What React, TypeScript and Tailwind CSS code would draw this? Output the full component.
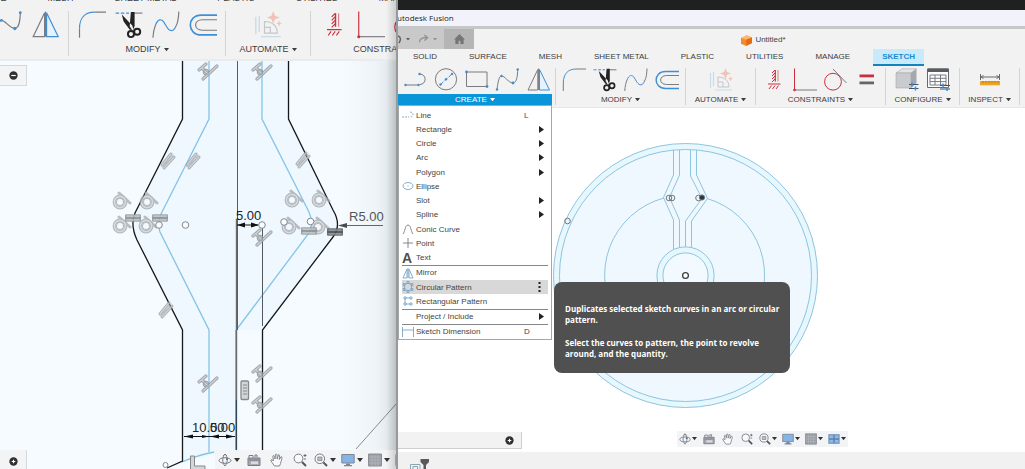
import type { ReactNode } from 'react'
import clsx from 'clsx'

const GREY = '#7b7b80'
const BLUE = '#3f8fd6'
const RED = '#c9303c'
const SKY = '#85c3e6'

const TABS = ['SOLID', 'SURFACE', 'MESH', 'SHEET METAL', 'PLASTIC', 'UTILITIES', 'MANAGE', 'SKETCH']

// Toolbar artwork, drawn on a 24x24 grid
const toolArt: Record<string, ReactNode> = {
  Line: (
    <>
      <path d="M2 17H15" stroke={GREY} />
      <path d="M16.5 6C24 6 24 16.5 16.5 16.5" stroke={GREY} />
      <g fill={BLUE} stroke="none"><circle cx="2.5" cy="17" r="1.2" /><circle cx="15.5" cy="17" r="1.2" /><circle cx="16.5" cy="6" r="1.2" /></g>
    </>
  ),
  Circle: (
    <>
      <circle cx="12" cy="11.3" r="10.6" stroke={GREY} />
      <path d="M6.5 16.5L18 6" stroke={BLUE} strokeDasharray="4 1.5" />
      <g fill={BLUE} stroke="none"><circle cx="6.5" cy="16.5" r="1.2" /><circle cx="12" cy="11.3" r="1.2" /><circle cx="18" cy="6" r="1.2" /></g>
    </>
  ),
  Rectangle: (
    <>
      <path d="M1.5 4H22V18.5H1.5Z" stroke={GREY} />
      <g fill={BLUE} stroke="none"><circle cx="1.5" cy="4" r="1.4" /><circle cx="22" cy="18.5" r="1.4" /></g>
    </>
  ),
  Spline: (
    <>
      <path d="M1 21.5C2 14 3 8 5.5 8C9 8 12 14.5 17 15C21 14.5 21.5 8 21.7 1" stroke={GREY} />
      <g fill={BLUE} stroke="none"><circle cx="1" cy="21.5" r="1.2" /><circle cx="5.5" cy="8" r="1.2" /><circle cx="17" cy="15" r="1.4" /><circle cx="21.7" cy="1.5" r="1.2" /></g>
    </>
  ),
  Mirror: (
    <>
      <path d="M10.8 1.5V22H1Z" stroke={GREY} />
      <path d="M12.5 1.5V22H22.5Z" stroke={BLUE} fill="#e4f3fd" />
      <path d="M11.6 .5V22" stroke={GREY} />
    </>
  ),
  Fillet: (
    <>
      <path d="M1.3 23V15M14 1H24" stroke={GREY} />
      <path d="M1.3 15C1.3 6 6 1 14 1" stroke={BLUE} />
    </>
  ),
  Trim: (
    <>
      <path d="M.5 1.8H12" stroke={BLUE} strokeDasharray="3 1.5" />
      <path d="M16.5 1.8H23.5" stroke={GREY} />
      <path d="M5.8 3L7.4 9L12.5 15.8L16 17L14.8 12.5ZM13.6 .8H16.8V13L15 17L12.6 13Z" fill="#222" stroke="none" />
      <circle cx="13.7" cy="19.8" r="2.6" stroke="#222" strokeWidth="1.7" />
      <circle cx="19" cy="17.8" r="2.6" stroke="#222" strokeWidth="1.7" />
    </>
  ),
  Extend: (
    <>
      <path d="M.8 23C1 18 2 14.5 3 12M20.5 13C22.5 10 22.8 5 23 .5" stroke={GREY} />
      <path d="M3 12C5 7 8 6 10.5 10C13 14.5 15 18 18 16.5C19 16 20 14.5 20.5 13" stroke={BLUE} />
    </>
  ),
  Offset: (
    <>
      <path d="M24 3.5H10.5C-2 3.5-2 20.5 10.5 20.5H24" stroke={BLUE} strokeWidth="1.4" />
      <path d="M24 7.5H11.5C3.7 7.5 3.7 16.5 11.5 16.5H24" stroke={GREY} />
    </>
  ),
  AutoConstrain: (
    <g opacity=".45">
      <path d="M1.5 5V20M4.5 4V18M6 22H23" stroke="#9ec3df" strokeWidth="1.2" />
      <path d="M9 9V19H20C20 13 16 9 9 9ZM9 14H14V19" stroke="#8c939c" />
      <path d="M16.5 0L18 4L22 5.5L18 7L16.5 11L15 7L11 5.5L15 4ZM21.5 8L22.2 10L24 10.7L22.2 11.4L21.5 13.4L20.8 11.4L19 10.7L20.8 10Z" fill="#ef8a73" stroke="none" />
    </g>
  ),
  Fix: (
    <g stroke={RED}>
      <path d="M13.3 2V13.5M6 16H18.5" strokeWidth="1.2" />
      <path d="M16 2V13.5" strokeWidth=".6" />
      <path d="M13 2L10 5M13 5L10 8M13 8L10 11M13 11L10 14M9.5 17.5L7 21M13 17.5L10.5 21M16.5 17.5L14 21" />
    </g>
  ),
  Perpendicular: (
    <>
      <path d="M1.5 22H24" stroke={GREY} />
      <path d="M1.5 .5V22" stroke={RED} />
      <circle cx="1.5" cy="22" r="1.3" fill={RED} stroke="none" />
    </>
  ),
  Tangent: (
    <>
      <circle cx="9" cy="13.7" r="8.4" stroke={RED} />
      <path d="M9 1L22.5 15" stroke={GREY} />
    </>
  ),
  Equal: (
    <g stroke="none">
      <path d="M4.5 6.5H19V9.3H4.5Z" fill={RED} />
      <path d="M4.5 13.5H19V16.3H4.5Z" fill="#66666a" />
    </g>
  ),
  Configure: (
    <>
      <path d="M1 5L7 .8H21.5L16 5Z" fill="#e3e4e6" stroke="#a5a8ac" strokeWidth=".6" />
      <path d="M1 5H16V20H1Z" fill="#c9cbce" stroke="#a5a8ac" strokeWidth=".6" />
      <path d="M16 5L21.5 .8V15L16 20Z" fill="#a4a7ab" stroke="none" />
      <path d="M14 16.5H23.5M14 20.5H23.5" stroke="#3f5366" strokeWidth="1.2" />
      <path d="M17 14.5V18.5M20.5 18.5V22.5" stroke={BLUE} strokeWidth="1.6" />
    </>
  ),
  Table: (
    <>
      <path d="M1.5 1H22.5V19.5H1.5Z" fill="#fff" stroke="#66696e" />
      <path d="M1.5 .5H22.5V4H1.5Z" fill="#595c61" stroke="none" />
      <path d="M4 7H20V17H4ZM4 10.3H20M4 13.6H20M9 7V17M14.5 7V17" stroke="#777b80" />
      <path d="M14 17.5H24M14 21H24" stroke="#3f5366" strokeWidth="1.2" />
      <path d="M17 15.5V19.5M21 19V23" stroke={BLUE} strokeWidth="1.6" />
    </>
  ),
  Measure: (
    <>
      <path d="M2.5 6V12M21.5 6V12M3 9H21M5.5 7.5L3 9L5.5 10.5M18.5 7.5L21 9L18.5 10.5" stroke="#66696e" />
      <path d="M2 13H22V17.3H2Z" fill="#eda51f" stroke="none" />
      <path d="M5 13V15M8 13V15M11 13V15M14 13V15M17 13V15M20 13V15" stroke="#a86c00" strokeWidth=".7" />
    </>
  ),
}

function ToolButton({ name, large }: { name: string; large?: boolean }) {
  return (
    <button aria-label={name} className="shrink-0">
      <svg viewBox="0 0 24 24" fill="none" className={clsx('overflow-visible', large ? 'size-7' : 'size-6')}>
        {toolArt[name]}
      </svg>
    </button>
  )
}

function Caret({ className }: { className?: string }) {
  return (
    <svg viewBox="0 0 6 4" className={clsx('shrink-0', className)} fill="currentColor">
      <path d="M0 0H6L3 4Z" />
    </svg>
  )
}

interface ToolGroupProps {
  label?: string
  tools: string[]
  large?: boolean
  active?: boolean
  className?: string
  children?: ReactNode
}

function ToolGroup({ label, tools, large, active, className, children }: ToolGroupProps) {
  return (
    <div className={clsx('relative flex shrink-0 flex-col border-r border-[#d4d4d4]', className)}>
      <div className={clsx('flex', large ? 'gap-[9px]' : 'gap-[7px]', label ? 'justify-center' : 'justify-end pr-2')}>
        {tools.map((tool) => (
          <ToolButton key={tool} name={tool} large={large} />
        ))}
      </div>
      {label && (
        <button
          className={clsx(
            'flex items-center justify-center gap-[3px]',
            large ? 'mt-[5px] h-3 text-[9px]' : 'mt-[2px] h-[11px] text-[8px]',
            active ? 'mr-[3px] bg-[#0b95d9] text-white' : 'text-[#3c3c3c]',
          )}
        >
          {label}
          <Caret className="w-[5px]" />
        </button>
      )}
      {children}
    </div>
  )
}

// Navigation bar artwork, 14x14 grid
const navArt: Record<string, ReactNode> = {
  Orbit: (
    <g stroke="#777b82">
      <ellipse cx="7" cy="7.5" rx="6" ry="2.8" />
      <path d="M7 1C4 4 4 10 7 13C10 10 10 4 7 1ZM5 3L7 1L9 3" />
      <circle cx="9" cy="6" r="1" fill="#446b96" stroke="none" />
    </g>
  ),
  'Look At': (
    <>
      <path d="M1 5H13V12.5H1Z" fill="#a6abb2" stroke="#777b82" />
      <path d="M2 4.5V2.5H6V4.5M8 4.5V2H10V4.5M2 7H12" stroke="#777b82" />
      <path d="M4 8.5H11V11H4Z" fill="#d8dce0" stroke="none" />
    </>
  ),
  Pan: (
    <path d="M4.5 13L2 9.5L.8 7C1.4 6 2.5 6.8 3.5 8L2.8 3C3.5 2 4.5 2.4 5 6L5.5 1.3C6.4.5 7.2 1 7.2 6L8.4 1.8C9.4 1.2 9.8 2 9.3 6.5L11 3.7C12 3.5 12.3 4.2 11.4 7.5L10.5 10.5L9.5 13Z" fill="#fafafa" stroke="#777b82" strokeWidth=".9" />
  ),
  Zoom: (
    <>
      <circle cx="5.5" cy="5.5" r="4.4" fill="#fafafa" stroke="#777b82" />
      <path d="M9 9L13 13" stroke="#505358" strokeWidth="2" />
      <path d="M10.5 2.5H13.5M12 1V4M11 6H13" stroke="#505358" strokeWidth=".8" />
    </>
  ),
  Fit: (
    <>
      <circle cx="5.8" cy="5.8" r="4.8" fill="#fafafa" stroke="#777b82" />
      <path d="M3.8 4H8V7.6H3.8Z" fill="#b9bdc3" stroke="#777b82" strokeWidth=".7" />
      <path d="M9.4 9.4L13 13" stroke="#505358" strokeWidth="2" />
    </>
  ),
  Display: (
    <>
      <path d="M.8 1.5H13.2V10H.8Z" fill="#85b4e6" stroke="#7e8791" />
      <path d="M5 10.5H9V12H11V13.3H3V12H5Z" fill="#7e8791" stroke="none" />
    </>
  ),
  Grid: (
    <>
      <path d="M.5 1H13.5V13H.5Z" fill="#9a9ea5" stroke="#8b8f96" />
      <path d="M1 4H13M1 7H13M1 10H13M4 2V13M7 2V13M10 2V13" stroke="#c0c4c9" strokeWidth=".5" />
    </>
  ),
  Viewports: (
    <>
      <path d="M.5 1.5H13.5V12.5H.5Z" fill="#5f7fa8" stroke="none" />
      <path d="M1.5 2.5H6.2V6.2H1.5ZM7.8 2.5H12.5V6.2H7.8ZM1.5 7.8H6.2V11.5H1.5ZM7.8 7.8H12.5V11.5H7.8Z" fill="#8fbaf0" stroke="none" />
    </>
  ),
}

const DROPDOWNS = ['Orbit', 'Fit', 'Display', 'Grid', 'Viewports']

function NavBar({ large, className }: { large?: boolean; className?: string }) {
  return (
    <div className={clsx('absolute flex items-center gap-[5px] bg-[#f3f4f5]', className)}>
      {Object.keys(navArt).map((name) => {
        const drop = DROPDOWNS.includes(name)
        return (
          <button
            key={name}
            aria-label={name}
            className={clsx('flex shrink-0 items-center text-[#333]', large ? 'gap-[2px]' : 'gap-px', !drop && (large ? 'px-[2px]' : 'px-px'))}
          >
            <svg viewBox="0 0 14 14" fill="none" className={large ? 'size-3.5' : 'size-3'}>
              {navArt[name]}
            </svg>
            {drop && <Caret className={large ? 'w-[6px]' : 'w-[5px]'} />}
          </button>
        )
      })}
    </div>
  )
}

function RoundToggle({ plus }: { plus?: boolean }) {
  return (
    <svg viewBox="0 0 10 10" className="size-[9px]">
      <circle cx="5" cy="5" r="4.6" fill="#303030" />
      <path d={plus ? 'M3 5H7M5 3V7' : 'M2.5 5H7.5'} stroke="#fff" strokeWidth="1.3" />
    </svg>
  )
}

// Constraint badges that sit next to the sketch curves
function ParallelMark({ x, y }: { x: number; y: number }) {
  return (
    <g transform={`translate(${x} ${y})`} strokeLinecap="round" opacity=".8">
      <path d="M-6 4L3 -7M-4 7L6 -4" stroke="#959ba0" strokeWidth="3" />
      <path d="M-6 4L3 -7M-4 7L6 -4" stroke="#c7cbce" strokeWidth="1.2" />
      <path d="M-5.5 6L5 -6" stroke="#aab0b4" strokeWidth="1" />
    </g>
  )
}

function CoincidentMark({ x, y }: { x: number; y: number }) {
  const d = 'M-9 -2L-2 -8M-6 -4L0 2M-5 7L9 -6'
  return (
    <g transform={`translate(${x} ${y})`} strokeLinecap="round" fill="none" opacity=".85">
      <path d={d} stroke="#92979b" strokeWidth="3.2" />
      <path d={d} stroke="#c7cbce" strokeWidth="1.4" />
      <circle cx="-2" cy="0" r="2.6" stroke="#92979b" strokeWidth="1.2" />
    </g>
  )
}

function TangentMark({ x, y }: { x: number; y: number }) {
  return (
    <g transform={`translate(${x} ${y})`} fill="none" opacity=".75">
      <path d="M-1 -9L10 1" stroke="#a5abaf" strokeWidth="3" strokeLinecap="round" />
      <circle r="5.6" stroke="#999fa4" strokeWidth="3.6" />
      <circle r="5.6" stroke="#cdd1d4" strokeWidth="1.6" />
      <circle r="3.6" fill="#f5faff" stroke="#8b9196" strokeWidth=".8" />
    </g>
  )
}

function EqualMark({ x, y, dark }: { x: number; y: number; dark?: boolean }) {
  return (
    <g transform={`translate(${x} ${y})`} opacity=".9">
      <rect x="-8" y="-3.8" width="16" height="7.6" rx="1" fill={dark ? '#606468' : '#999fa3'} />
      <path d="M-6.5 -1.8H6.5M-6.5 1.8H6.5" stroke={dark ? '#94989b' : '#c9cdd0'} strokeWidth="1.2" />
      <path d="M-8 0H8" stroke={dark ? '#2e3032' : '#787e82'} strokeWidth=".8" />
    </g>
  )
}

function DetailSketch() {
  return (
    <svg viewBox="0 61 398 408" preserveAspectRatio="xMinYMin slice" fill="none" className="absolute inset-0 size-full">
      <path d="M182 61V119L134 213Q131 225 137 240L182 330V461L236 450V330H262L323 250L333 237Q342 225 333 210L288 119V61Z" fill="#eff8fe" />
      <g stroke={SKY} strokeWidth="1.3">
        <path d="M209 61V119L161 214Q157 222 160 232L209 330V452" />
        <path d="M262 61V119L309 212Q314 224 309 233L237 329" />
        <path d="M182 462Q198 455 214 452" />
      </g>
      <path d="M237.5 61V330" stroke="#5a5c5e" />
      <path d="M236.5 219V400" stroke="#686b6d" strokeWidth="1.4" />
      <path d="M235.5 330V450" stroke="#6fb1d8" />
      <path d="M236.5 400V450" stroke="#2c4656" strokeWidth="1.2" />
      <path d="M262.5 228V326" stroke="#55585a" />
      <g stroke="#16181a" strokeWidth="1.3">
        <path d="M182.5 61V119L135 213Q130 225 137 240L182.5 330V461L167 468" />
        <path d="M288.5 61V119L333 210Q342 225 333 237L262.5 330V450" />
      </g>
      <path d="M356 449L397 403" stroke="#8d9093" />

      {[[208, 72], [262, 72], [262, 238], [208, 384], [262, 374], [262, 405]].map(([x, y]) => (
        <CoincidentMark key={`${x}-${y}`} x={x} y={y} />
      ))}
      {[[168, 161], [193, 161], [303, 160], [166, 310]].map(([x, y]) => (
        <ParallelMark key={`${x}-${y}`} x={x} y={y} />
      ))}
      {[[120, 202], [147, 202], [120, 226], [146, 226], [292, 200], [319, 200], [289, 227], [318, 227]].map(([x, y]) => (
        <TangentMark key={`${x}-${y}`} x={x} y={y} />
      ))}
      <EqualMark x={133} y={218} />
      <EqualMark x={160} y={218} />
      <EqualMark x={309} y={231} />
      <EqualMark x={335} y={232} dark />
      <rect x="241" y="381" width="7.5" height="18.5" rx="1" fill="#d3d6d9" stroke="#85898c" strokeWidth="1.3" />
      <path d="M243 385H247M243 388H247M243 391H247M243 394H247" stroke="#85898c" />
      <g stroke="#85898c" fill="#fafdff">
        <circle cx="159" cy="225" r="3.3" />
        <circle cx="185.5" cy="225" r="3.3" />
        <circle cx="262" cy="225" r="3.3" />
        <circle cx="284" cy="222" r="3.3" />
        <circle cx="310.5" cy="221.5" r="3.3" />
        <circle cx="165.5" cy="465" r="2.5" />
        <path d="M190.5 456H194.5V466H205V470H190.5Z" fill="#d3d6d9" />
      </g>

      <g stroke="#111">
        <path d="M237 225H258M184 436.5H235" />
        <path
          d="M237 225L245 222.5V227.5ZM259 225L251 222.5V227.5ZM184 436.5L193 434.5V438.5ZM210 436.5L219 434.5V438.5ZM209 436.5L202 435V438ZM235 436.5L226 434.5V438.5Z"
          fill="#111"
          stroke="none"
        />
      </g>
      <path d="M340 225.5H383" stroke="#66696c" />
      <path d="M338 225.5L347 223V228Z" fill="#4b4e50" />
      <g fontSize="13" fontFamily="Liberation Sans, sans-serif" fill="#222">
        <text x="236" y="220">5.00</text>
        <text x="192" y="432">10.00</text>
        <text x="210" y="432">5.00</text>
        <text x="349" y="221" fill="#55585b">R5.00</text>
      </g>
    </svg>
  )
}

function WheelSketch() {
  return (
    <svg viewBox="398 108 627 344" preserveAspectRatio="xMinYMin slice" fill="none" className="absolute inset-0 size-full">
      <g stroke="#8fc4de">
        <circle cx="685.5" cy="275.5" r="132" fill="#e6f8fe" />
        <circle cx="685.5" cy="275.5" r="126" fill="#eff8fe" />
        <path d="M664 198A80 80 0 1 0 707 198.5" />
        <circle cx="685.5" cy="275.5" r="28.6" fill="#e6f8fe" />
        <circle cx="685.5" cy="275.5" r="22.6" fill="#f2faff" />
        <path d="M673.5 150V175L663.5 197.5L673.5 220V249M679.5 150V175L669.5 197.5L679.5 220V248" />
        <path d="M696.5 150V175L707.5 198.5L691.5 221V248M690.5 150V176L702 198.5L685.5 221V247" />
      </g>
      <g stroke="#72777b">
        <circle cx="669" cy="198" r="2.8" />
        <circle cx="672" cy="198" r="2.8" />
        <circle cx="698.5" cy="198" r="2.8" />
        <circle cx="567.5" cy="221" r="2.8" />
        <circle cx="702" cy="197.5" r="2.6" fill="#303438" />
      </g>
      <circle cx="685.5" cy="275.5" r="2.9" fill="#fff" stroke="#3b3f42" strokeWidth="1.3" />
    </svg>
  )
}

interface MenuEntry {
  label: string
  icon?: ReactNode
  shortcut?: string
  submenu?: boolean
  divider?: boolean
  active?: boolean
}

const MENU: MenuEntry[] = [
  { label: 'Line', shortcut: 'L', icon: <path d="M0 8H7M8 3C12 3 12 8 8 8" strokeDasharray="2 1" /> },
  { label: 'Rectangle', submenu: true },
  { label: 'Circle', submenu: true },
  { label: 'Arc', submenu: true },
  { label: 'Polygon', submenu: true },
  { label: 'Ellipse', icon: <><ellipse cx="6" cy="6" rx="5" ry="3.5" /><path d="M5.5 6H6.5" /></> },
  { label: 'Slot', submenu: true },
  { label: 'Spline', submenu: true },
  { label: 'Conic Curve', icon: <path d="M1 11C3 9 3 2 6 2C9 2 9 9 11 11" stroke={GREY} /> },
  { label: 'Point', icon: <path d="M6 1V11M1 6H11" stroke={GREY} /> },
  { label: 'Text' },
  { label: 'Mirror', divider: true, icon: <path d="M6 1V11M5 2L1 11H5ZM7 2L11 11H7Z" /> },
  { label: 'Circular Pattern', active: true, icon: <><circle cx="6" cy="6" r="3.8" /><path d="M5 .5H7V2.5H5ZM5 9.5H7V11.5H5ZM1 2.5H3V4.5H1ZM9 2.5H11V4.5H9ZM1 7.5H3V9.5H1ZM9 7.5H11V9.5H9Z" /></> },
  { label: 'Rectangular Pattern', icon: <path d="M2 2H4V4H2ZM8 2H10V4H8ZM2 8H4V10H2ZM8 8H10V10H8ZM4 3H8M4 9H8M3 4V8" /> },
  { label: 'Project / Include', submenu: true, divider: true },
  { label: 'Sketch Dimension', shortcut: 'D', divider: true, icon: <path d="M.5 1V11M11.5 1V11M1 4H11" /> },
]

function CreateMenu() {
  return (
    <div className="absolute top-full left-0 z-10 flex h-[235px] w-[154px] flex-col border border-[#a3a7aa] bg-white px-[3px] pt-[2px] text-[8px] text-[#444]">
      {MENU.map((entry) => (
        <button
          key={entry.label}
          className={clsx(
            'flex min-h-0 flex-1 items-center text-left',
            entry.divider && 'border-t border-[#85888b]',
            entry.active && 'bg-[#d8d8d8]',
          )}
        >
          <span className="flex w-[14px] shrink-0 items-center">
            {entry.label === 'Text' ? (
              <span aria-hidden="true" className="text-[14px] leading-3 font-bold text-[#505050]">A</span>
            ) : (
              entry.icon && (
                <svg viewBox="0 0 12 12" fill="none" stroke="#77a5c8" strokeWidth=".9" className="size-3">
                  {entry.icon}
                </svg>
              )
            )}
          </span>
          <span className="flex-1 pt-px whitespace-nowrap">{entry.label}</span>
          {entry.shortcut && <span className="w-6 pt-px">{entry.shortcut}</span>}
          {entry.submenu && (
            <svg viewBox="0 0 5 7" className="mr-1 w-[5px]" fill="#222">
              <path d="M0 0L5 3.5L0 7Z" />
            </svg>
          )}
          {entry.active && (
            <svg viewBox="0 0 3 10" className="mr-[7px] w-[3px]" fill="#222">
              <path d="M.5 0H2.5V2H.5ZM.5 4H2.5V6H.5ZM.5 8H2.5V10H.5Z" />
            </svg>
          )}
        </button>
      ))}
    </div>
  )
}

function DetailPanel() {
  return (
    <section className="relative flex min-w-0 flex-col overflow-hidden bg-[#f5fbff]">
      <div className="flex h-[61px] shrink-0 flex-col justify-end overflow-hidden border-b-2 border-[#e9ebec] bg-[#f2f2f2] pb-[3px]">
        <div className="-ml-9 flex h-3 shrink-0 items-center gap-[41px] text-[9px] whitespace-nowrap text-[#3c3c3c]">
          {TABS.slice(1, 7).map((tab) => (
            <button key={tab}>{tab}</button>
          ))}
        </div>
        <div className="mt-[6px] flex">
          <ToolGroup large tools={['Spline', 'Mirror']} className="w-[69px]" />
          <ToolGroup large label="MODIFY" tools={['Fillet', 'Trim', 'Extend', 'Offset']} className="w-[157px]" />
          <ToolGroup large label="AUTOMATE" tools={['AutoConstrain']} className="w-[85px]" />
          <ToolGroup large label="CONSTRAINTS" tools={['Fix', 'Perpendicular', 'Tangent', 'Equal']} className="w-[158px]" />
        </div>
      </div>
      <div className="relative min-h-0 flex-1">
        <DetailSketch />
        <div className="pointer-events-none absolute inset-y-0 right-0 w-14 bg-linear-to-r from-black/0 via-black/3 via-60% to-black/10" />
        <button aria-label="Collapse browser" className="absolute top-1 left-0 flex h-[21px] w-[27px] items-center justify-center border border-l-0 border-[#d5d8da] bg-[#f3f4f5]">
          <RoundToggle />
        </button>
        <button aria-label="Add comment" className="absolute bottom-0 left-0 flex h-[19px] w-[27px] items-center justify-center border-r border-[#d5d8da] bg-[#f3f4f5] pt-1">
          <RoundToggle plus />
        </button>
        <NavBar large className="right-0 bottom-0 left-[54%] h-[19px] overflow-hidden pl-[3px]" />
      </div>
      <div className="pointer-events-none absolute inset-y-0 right-0 w-3 border-r-2 border-[#97999a] bg-linear-to-r from-black/0 to-black/15" />
    </section>
  )
}

function FusionWindow() {
  return (
    <section className="flex min-w-0 flex-col overflow-hidden bg-white">
      <div className="h-[10px] shrink-0 bg-[#202020]" />
      <header className="flex h-[19px] shrink-0 items-center overflow-hidden border-b-[3px] border-[#c6c7c9] bg-[#f2f3fa] font-['Open_Sans',sans-serif] text-[8px] text-[#222]">
        <span className="-ml-[6px]">Autodesk Fusion</span>
      </header>

      <div className="flex h-5 shrink-0 bg-[#f2f2f2]">
        <div className="flex w-[46px] items-center gap-1 bg-[#c9c9c9] text-[#5f6163]">
          <button aria-label="Undo" className="flex items-center gap-1">
            <svg viewBox="0 0 4 10" className="w-1" fill="none" stroke="currentColor" strokeWidth="1.5">
              <path d="M0 2C3 3 3 6 1 9" />
            </svg>
            <Caret className="w-1" />
          </button>
          <button aria-label="Redo" className="ml-1 flex items-center gap-1 text-[#8f9193]">
            <svg viewBox="0 0 12 10" className="w-[11px]" fill="none" stroke="currentColor" strokeWidth="1.5">
              <path d="M1.5 9C2 5 5 3.5 10 4M7 1L10.5 4L7 7" />
            </svg>
            <Caret className="w-1" />
          </button>
        </div>
        <button aria-label="Home" className="flex w-[30px] items-center justify-center bg-[#b5b5b5]">
          <svg viewBox="0 0 12 11" className="w-[11px]" fill="#737577">
            <path d="M6 0L12 6H10.5V11H7V7.5H5V11H1.5V6H0Z" />
          </svg>
        </button>
        <div className="flex flex-1 items-center justify-center gap-[3px] pt-[2px] pl-7 text-[8px] text-[#444]">
          <svg viewBox="0 0 12 12" className="size-[11px]">
            <path d="M0 3L6.5 0L12 2.5L5.5 5Z" fill="#ffb66b" />
            <path d="M0 3L5.5 5V12L0 9.5Z" fill="#f58a2b" />
            <path d="M5.5 5L12 2.5V9L5.5 12Z" fill="#e46b13" />
          </svg>
          Untitled*
        </div>
      </div>

      <nav className="flex h-[17px] shrink-0 items-stretch gap-[14px] bg-[#f2f2f2] pl-[6px] text-[8px] whitespace-nowrap text-[#3c3c3c]">
        {TABS.map((tab) => (
          <button
            key={tab}
            className={clsx(
              'border-b-2 px-[9px]',
              tab === 'SKETCH' ? 'border-[#1283bd] bg-[#c9eafa] font-bold text-[#188bd3]' : 'border-transparent',
            )}
          >
            {tab}
          </button>
        ))}
      </nav>

      <div className="flex h-[42px] shrink-0 border-b border-[#e6e6e6] bg-[#f2f2f2] py-[2px]">
        <ToolGroup label="CREATE" active tools={['Line', 'Circle', 'Rectangle', 'Spline', 'Mirror']} className="w-[158px]">
          <CreateMenu />
        </ToolGroup>
        <ToolGroup label="MODIFY" tools={['Fillet', 'Trim', 'Extend', 'Offset']} className="w-[130px]" />
        <ToolGroup label="AUTOMATE" tools={['AutoConstrain']} className="w-[70px]" />
        <ToolGroup label="CONSTRAINTS" tools={['Fix', 'Perpendicular', 'Tangent', 'Equal']} className="w-[130px]" />
        <ToolGroup label="CONFIGURE" tools={['Configure', 'Table']} className="w-[74px]" />
        <ToolGroup label="INSPECT" tools={['Measure']} className="w-[60px]" />
      </div>

      <main className="relative min-h-0 flex-1">
        <WheelSketch />
        <div
          role="tooltip"
          className="absolute top-[174px] left-[156px] z-10 w-[236px] rounded-lg bg-[#505050] pt-[21px] pr-1 pb-[14px] pl-[11px] font-['Open_Sans',sans-serif] text-[8px] leading-[11px] font-bold text-white"
        >
          <p>Duplicates selected sketch curves in an arc or circular pattern.</p>
          <p className="mt-3 pr-4">Select the curves to pattern, the point to revolve around, and the quantity.</p>
        </div>
        <div className="absolute bottom-[3px] left-0 flex h-[17px] w-[124px] items-center justify-end border-r border-b border-[#cfcfcf] bg-[#f2f2f2] pr-[7px]">
          <button aria-label="Add comment">
            <RoundToggle plus />
          </button>
        </div>
        <NavBar className="bottom-[5px] left-[279px] h-4 px-[2px]" />
      </main>

      <footer className="flex h-[17px] shrink-0 items-end overflow-hidden bg-[#f1f1f1] pl-3">
        <svg viewBox="0 0 20 10" fill="none" className="h-[10px] w-5">
          <path d="M.5 10V5.5H10V10M3 10V7.5H7.5V10" stroke="#8ba6b0" />
          <path d="M10.5 0H19V3L16 6V10H13.5V6L10.5 3Z" fill="#58595b" />
        </svg>
      </footer>
    </section>
  )
}

export default function App() {
  return (
    <div className="grid h-screen grid-cols-[minmax(0,398fr)_minmax(0,627fr)] overflow-hidden font-['Liberation_Sans',Arial,sans-serif]">
      <DetailPanel />
      <FusionWindow />
    </div>
  )
}
